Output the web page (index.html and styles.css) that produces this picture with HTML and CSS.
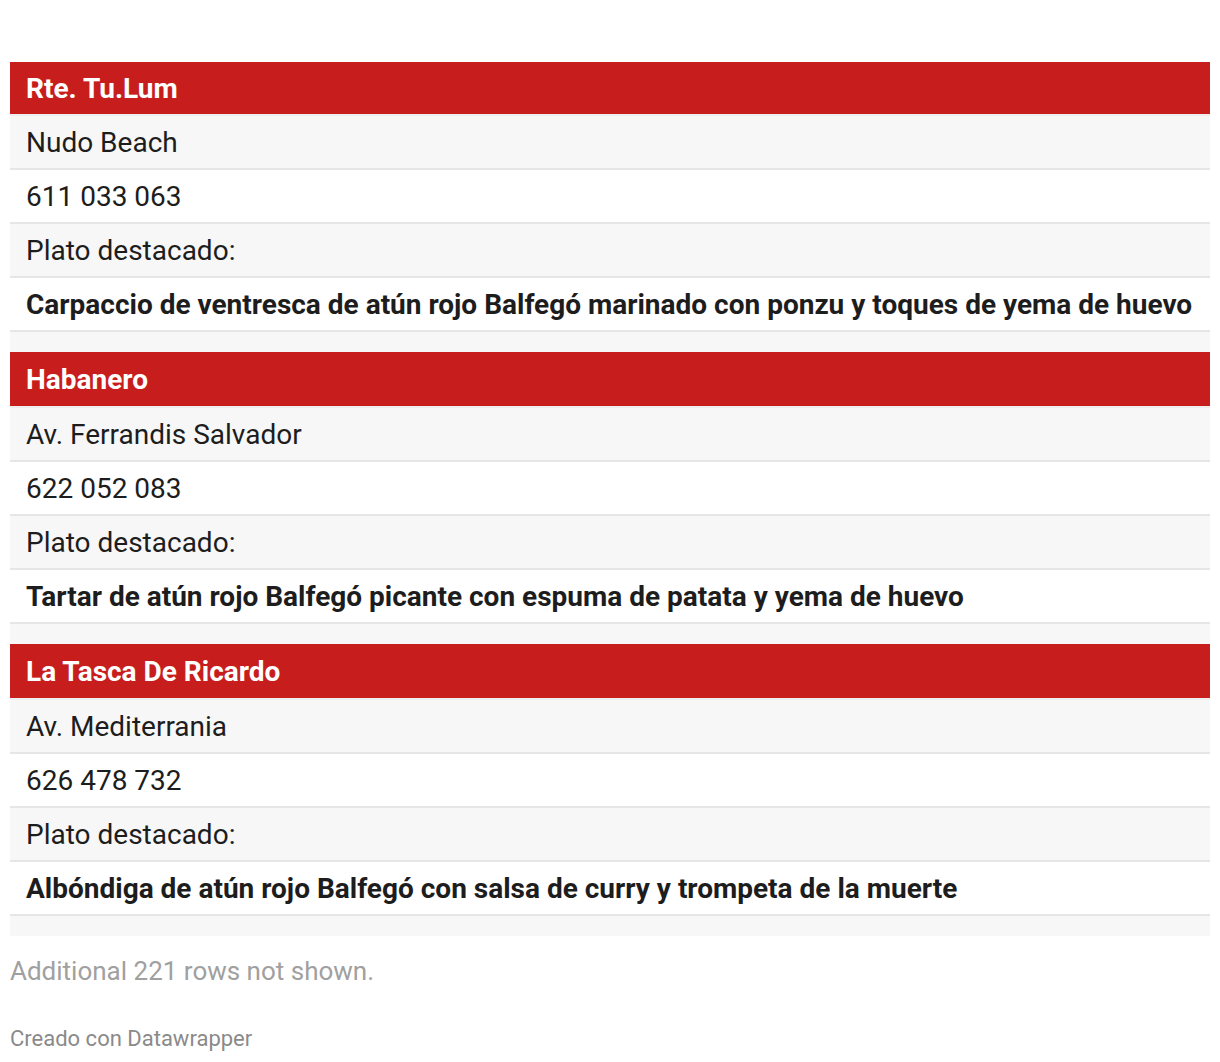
FILE: index.html
```html
<!DOCTYPE html>
<html lang="es">
<head>
<meta charset="utf-8">
<title>Tabla</title>
<link rel="stylesheet" href="styles.css">
</head>
<body>
<div class="wrap">
  <div class="table">
    <div class="group">
      <div class="head">Rte. Tu.Lum</div>
      <div class="row alt">Nudo Beach</div>
      <div class="row">611 033 063</div>
      <div class="row alt">Plato destacado:</div>
      <div class="row bold">Carpaccio de ventresca de atún rojo Balfegó marinado con ponzu y toques de yema de huevo</div>
      <div class="gap"></div>
    </div>
    <div class="group">
      <div class="head">Habanero</div>
      <div class="row alt">Av. Ferrandis Salvador</div>
      <div class="row">622 052 083</div>
      <div class="row alt">Plato destacado:</div>
      <div class="row bold">Tartar de atún rojo Balfegó picante con espuma de patata y yema de huevo</div>
      <div class="gap"></div>
    </div>
    <div class="group">
      <div class="head">La Tasca De Ricardo</div>
      <div class="row alt">Av. Mediterrania</div>
      <div class="row">626 478 732</div>
      <div class="row alt">Plato destacado:</div>
      <div class="row bold">Albóndiga de atún rojo Balfegó con salsa de curry y trompeta de la muerte</div>
      <div class="gap"></div>
    </div>
  </div>
  <p class="more">Additional 221 rows not shown.</p>
  <p class="credit">Creado con Datawrapper</p>
</div>
</body>
</html>
```
FILE: styles.css
```css
html, body {
  margin: 0;
  padding: 0;
  background: #ffffff;
}
body {
  font-family: Roboto, "Liberation Sans", sans-serif;
  color: #1d1d1d;
}
.wrap {
  padding: 62px 10px 0 10px;
}
.table {
  display: flex;
  flex-direction: column;
}
.group {
  display: flex;
  flex-direction: column;
}
.head {
  background: #c71e1d;
  color: #ffffff;
  font-weight: 700;
  font-size: 28px;
  height: 52px;
  line-height: 52px;
  padding: 2px 16px 0 16px;
  border-bottom: 2px solid #eeeeee;
}
.group:first-child .head {
  height: 51px;
  line-height: 51px;
  padding-top: 1px;
}
.row {
  background: #ffffff;
  font-size: 28px;
  height: 50px;
  line-height: 50px;
  padding: 2px 16px 0 16px;
  border-bottom: 2px solid #e6e6e6;
  white-space: nowrap;
}
.row.alt {
  background: #f7f7f7;
}
.row.bold {
  font-weight: 700;
}
.gap {
  height: 20px;
  background: #f7f7f7;
}
.more {
  margin: 20px 0 0 0;
  font-size: 26px;
  line-height: 30px;
  color: #a0a0a0;
}
.credit {
  margin: 40px 0 0 0;
  font-size: 22px;
  line-height: 26px;
  color: #8a8a8a;
}
```
